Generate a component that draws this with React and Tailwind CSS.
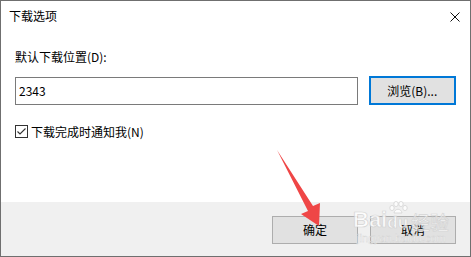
import React from 'react';

const font = { fontFamily: '"Noto Sans CJK SC", "Noto Sans", sans-serif' };
const mark = { fontFamily: '"Liberation Sans", sans-serif', WebkitTextStroke: '0.7px #cfcfcf' };

const App = () => {
  return (
    <div className="relative w-[471px] h-[257px] bg-white border border-[#6f6f6f] flex flex-col text-[12px] text-black overflow-hidden" style={font}>
      {/* title bar */}
      <div className="h-[30px] flex items-center justify-between pl-[8px] pr-[10px] shrink-0">
        <span className="leading-none">下载选项</span>
        <svg width="10" height="10" viewBox="0 0 10 10" className="mt-[1px]">
          <path d="M0.5 0.5 L9.5 9.5 M9.5 0.5 L0.5 9.5" stroke="#111" strokeWidth="1" />
        </svg>
      </div>

      {/* body */}
      <div className="flex-1 px-[14px] pt-[20px]">
        <div className="leading-none h-[12px]">默认下载位置(D):</div>
        <div className="flex items-center mt-[13px] gap-[11px]">
          <div className="w-[345px] h-[28px] border border-[#7a7a7a] flex items-center px-[3px]">2343</div>
          <button className="w-[88px] h-[29px] bg-[#e1e1e1] border-2 border-[#0078d7] flex items-center justify-center leading-none">
            浏览(B)...
          </button>
        </div>
        <div className="flex items-center mt-[20px] gap-[3px]">
          <div className="w-[13px] h-[13px] border border-[#333] bg-white flex items-center justify-center">
            <svg width="11" height="11" viewBox="0 0 11 11">
              <path d="M1.5 5.5 L4 8 L9.5 2.5" stroke="#333" strokeWidth="1.1" fill="none" />
            </svg>
          </div>
          <span className="leading-none">下载完成时通知我(N)</span>
        </div>
      </div>

      {/* footer */}
      <div className="h-[54px] bg-[#f0f0f0] shrink-0 flex justify-end items-start pt-[14px] pr-[14px] gap-[12px]">
        <button className="w-[86px] h-[28px] bg-[#e1e1e1] border border-[#adadad] flex items-center justify-center leading-none">确定</button>
        <button className="w-[86px] h-[28px] bg-[#e1e1e1] border border-[#adadad] flex items-center justify-center leading-none">取消</button>
      </div>

      {/* red annotation arrow */}
      <svg className="absolute left-0 top-0 pointer-events-none" width="471" height="257">
        <polygon points="276,149 312,205 319,202 318,225 300,213 307,210" fill="#ef4646" />
      </svg>

      {/* baidu watermark */}
      <div className="absolute left-[352px] top-[200px] pointer-events-none flex flex-col items-start opacity-80">
        <div className="flex items-end leading-none text-white font-bold text-[22px]" style={mark}>
          <span>Bai</span>
          <span className="flex flex-col items-center">
            <svg width="20" height="13" viewBox="0 0 20 13">
              <g fill="#fff" stroke="#cfcfcf" strokeWidth="0.8">
                <ellipse cx="4" cy="7" rx="2.2" ry="2.6" />
                <ellipse cx="8" cy="3" rx="2.2" ry="2.6" />
                <ellipse cx="13" cy="3" rx="2.2" ry="2.6" />
                <ellipse cx="17" cy="7" rx="2.2" ry="2.6" />
                <path d="M6 12 C7 7 13 7 14 12 Z" />
              </g>
            </svg>
            <span className="text-[17px]">du</span>
          </span>
          <span className="text-[19px] font-normal ml-[3px]" style={{ fontFamily: '"Noto Sans CJK SC", sans-serif' }}>经验</span>
        </div>
        <div className="text-[11px] leading-none text-white mt-[2px] ml-[4px]" style={{ fontFamily: '"Liberation Sans", sans-serif', WebkitTextStroke: '0.4px #cfcfcf' }}>jingyan.baidu.com</div>
      </div>
    </div>
  );
};

export default App;
